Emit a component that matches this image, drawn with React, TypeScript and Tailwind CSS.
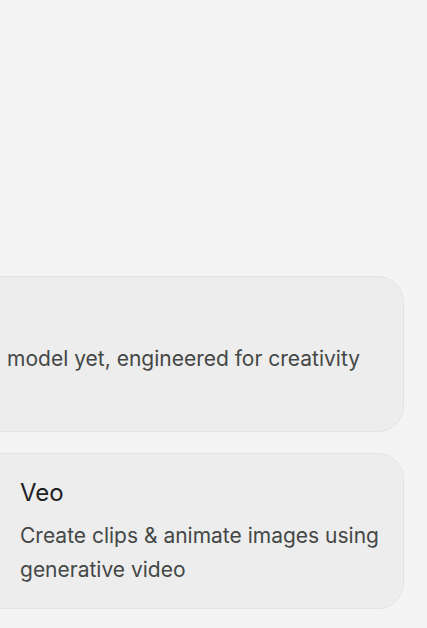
export default function App() {
  return (
    <div
      className="w-[427px] h-[628px] overflow-hidden bg-[#f4f4f4]"
      style={{ fontFamily: "Inter, 'Noto Sans', sans-serif" }}
    >
      <div className="flex flex-col gap-[21px] pt-[276px] pr-[23px]">
        <div className="ml-[-600px] h-[156px] rounded-[26px] border border-[#e3e3e3] bg-[#ededed] flex flex-col pt-[22px] pl-6 pr-[43px]">
          <div className="h-[32px]" />
          <div className="mt-[11px] flex justify-end">
            <span className="whitespace-nowrap text-[21px] leading-[34px] text-[#444746]">
              Our latest image generation model yet, engineered for creativity
            </span>
          </div>
        </div>
        <div className="ml-[-40px] h-[156px] rounded-[26px] border border-[#e3e3e3] bg-[#ededed] flex flex-col pt-[23px] pl-[59px] pr-4">
          <div className="text-[24px] leading-[32px] text-[#1f1f1f]">Veo</div>
          <div className="mt-[10px] text-[21px] leading-[34px] text-[#444746]">
            Create clips &amp; animate images using generative video
          </div>
        </div>
      </div>
    </div>
  );
}
